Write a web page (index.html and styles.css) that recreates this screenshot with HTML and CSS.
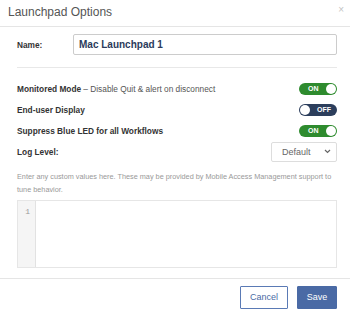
FILE: index.html
```html
<!DOCTYPE html>
<html>
<head>
  <title>Launchpad Options</title>
  <link rel="stylesheet" href="styles.css">
</head>
<body>
  <div class="modal">
    <div class="modal-header">
      <h4>Launchpad Options</h4>
      <span class="close">&times;</span>
    </div>

    <div class="modal-body">
      <div class="name-row">
        <label for="lpName">Name:</label>
        <input id="lpName" type="text" value="Mac Launchpad 1">
      </div>

      <div class="options">
        <div class="option-row">
          <span class="desc"><b>Monitored Mode</b> &ndash; Disable Quit &amp; alert on disconnect</span>
          <span class="toggle on"><span class="txt">ON</span><span class="knob"></span></span>
        </div>
        <div class="option-row">
          <b>End-user Display</b>
          <span class="toggle off"><span class="knob"></span><span class="txt">OFF</span></span>
        </div>
        <div class="option-row">
          <b>Suppress Blue LED for all Workflows</b>
          <span class="toggle on"><span class="txt">ON</span><span class="knob"></span></span>
        </div>
        <div class="option-row">
          <b>Log Level:</b>
          <div class="select">Default
            <svg width="7" height="5" viewBox="0 0 7 5"><path d="M1 1l2.5 2.5L6 1" fill="none" stroke="#666" stroke-width="1.2"/></svg>
          </div>
        </div>
      </div>

      <p class="help">Enter any custom values here. These may be provided by Mobile Access Management support to tune behavior.</p>

      <div class="editor">
        <div class="gutter">1</div>
        <div class="code"></div>
      </div>
    </div>

    <div class="modal-footer">
      <button class="btn btn-cancel">Cancel</button>
      <button class="btn btn-save">Save</button>
    </div>
  </div>
</body>
</html>
```

FILE: styles.css
```css
body {
  margin: 0;
  font-family: 'Liberation Sans', Arial, sans-serif;
  background-color: white;
  color: #333;
}
.modal {
  width: 350px;
  height: 315px;
  display: flex;
  flex-direction: column;
}
.modal-header {
  height: 26px;
  border-bottom: 1px solid #e5e5e5;
  display: flex;
  justify-content: space-between;
  padding: 0 6px 0 8px;
}
.modal-header h4 {
  margin: 0;
  font-size: 12px;
  font-weight: normal;
  line-height: 24px;
  color: #555;
}
.close {
  font-size: 10px;
  color: #c4c4c4;
  line-height: 20px;
}
.modal-body {
  padding: 7px 13px 0 17px;
  flex: 1;
}
.name-row {
  display: flex;
  align-items: center;
  padding-bottom: 12px;
  border-bottom: 1px solid #e8e8e8;
}
.name-row label {
  width: 56px;
  font-size: 8.3px;
  font-weight: bold;
}
.name-row input {
  flex: 1;
  height: 21px;
  box-sizing: border-box;
  border: 1px solid #ccc;
  border-radius: 2px;
  padding: 0 5px;
  font-family: inherit;
  font-size: 10px;
  font-weight: bold;
  color: #2b3b5b;
}
.options {
  padding-top: 10px;
}
.option-row {
  display: flex;
  justify-content: space-between;
  align-items: center;
  height: 21px;
  font-size: 8.3px;
  color: #333;
}
.option-row .desc {
  color: #555;
}
.option-row .desc b {
  color: #333;
}
.toggle {
  width: 38px;
  height: 12px;
  border-radius: 6px;
  box-sizing: border-box;
  display: flex;
  align-items: center;
  justify-content: space-between;
  padding: 0 1px 0 9px;
}
.toggle.on {
  background: #2e8b2e;
}
.toggle.off {
  background: #2c3e5c;
  padding: 0 6px 0 1px;
}
.toggle .txt {
  color: white;
  font-size: 7px;
  font-weight: bold;
}
.toggle .knob {
  width: 10px;
  height: 10px;
  border-radius: 50%;
  background: white;
}
.select {
  width: 66px;
  height: 20px;
  box-sizing: border-box;
  border: 1px solid #ddd;
  border-radius: 2px;
  display: flex;
  align-items: center;
  justify-content: space-between;
  padding: 0 5px 0 10px;
  font-size: 9px;
  color: #666;
  font-weight: normal;
}
.help {
  margin: 8px 0 0;
  font-size: 7.3px;
  line-height: 13px;
  color: #999;
}
.editor {
  margin-top: 4px;
  height: 66px;
  border: 1px solid #e6e6e6;
  display: flex;
}
.gutter {
  width: 18px;
  background: #f5f5f5;
  border-right: 1px solid #e2e2e2;
  font-family: 'Liberation Mono', monospace;
  font-size: 8px;
  color: #999;
  text-align: right;
  padding: 6px 5px 0 0;
  box-sizing: border-box;
}
.code {
  flex: 1;
}
.modal-footer {
  border-top: 1px solid #e5e5e5;
  height: 36px;
  display: flex;
  justify-content: flex-end;
  align-items: center;
  gap: 9px;
  padding: 0 13px 0 0;
}
.btn {
  height: 23px;
  font-family: inherit;
  font-size: 9px;
  border-radius: 1px;
}
.btn-cancel {
  width: 48px;
  background: white;
  border: 1px solid #5a7ab5;
  color: #4a6aa5;
}
.btn-save {
  width: 40px;
  background: #4a6aa5;
  border: 1px solid #4a6aa5;
  color: white;
}
```
